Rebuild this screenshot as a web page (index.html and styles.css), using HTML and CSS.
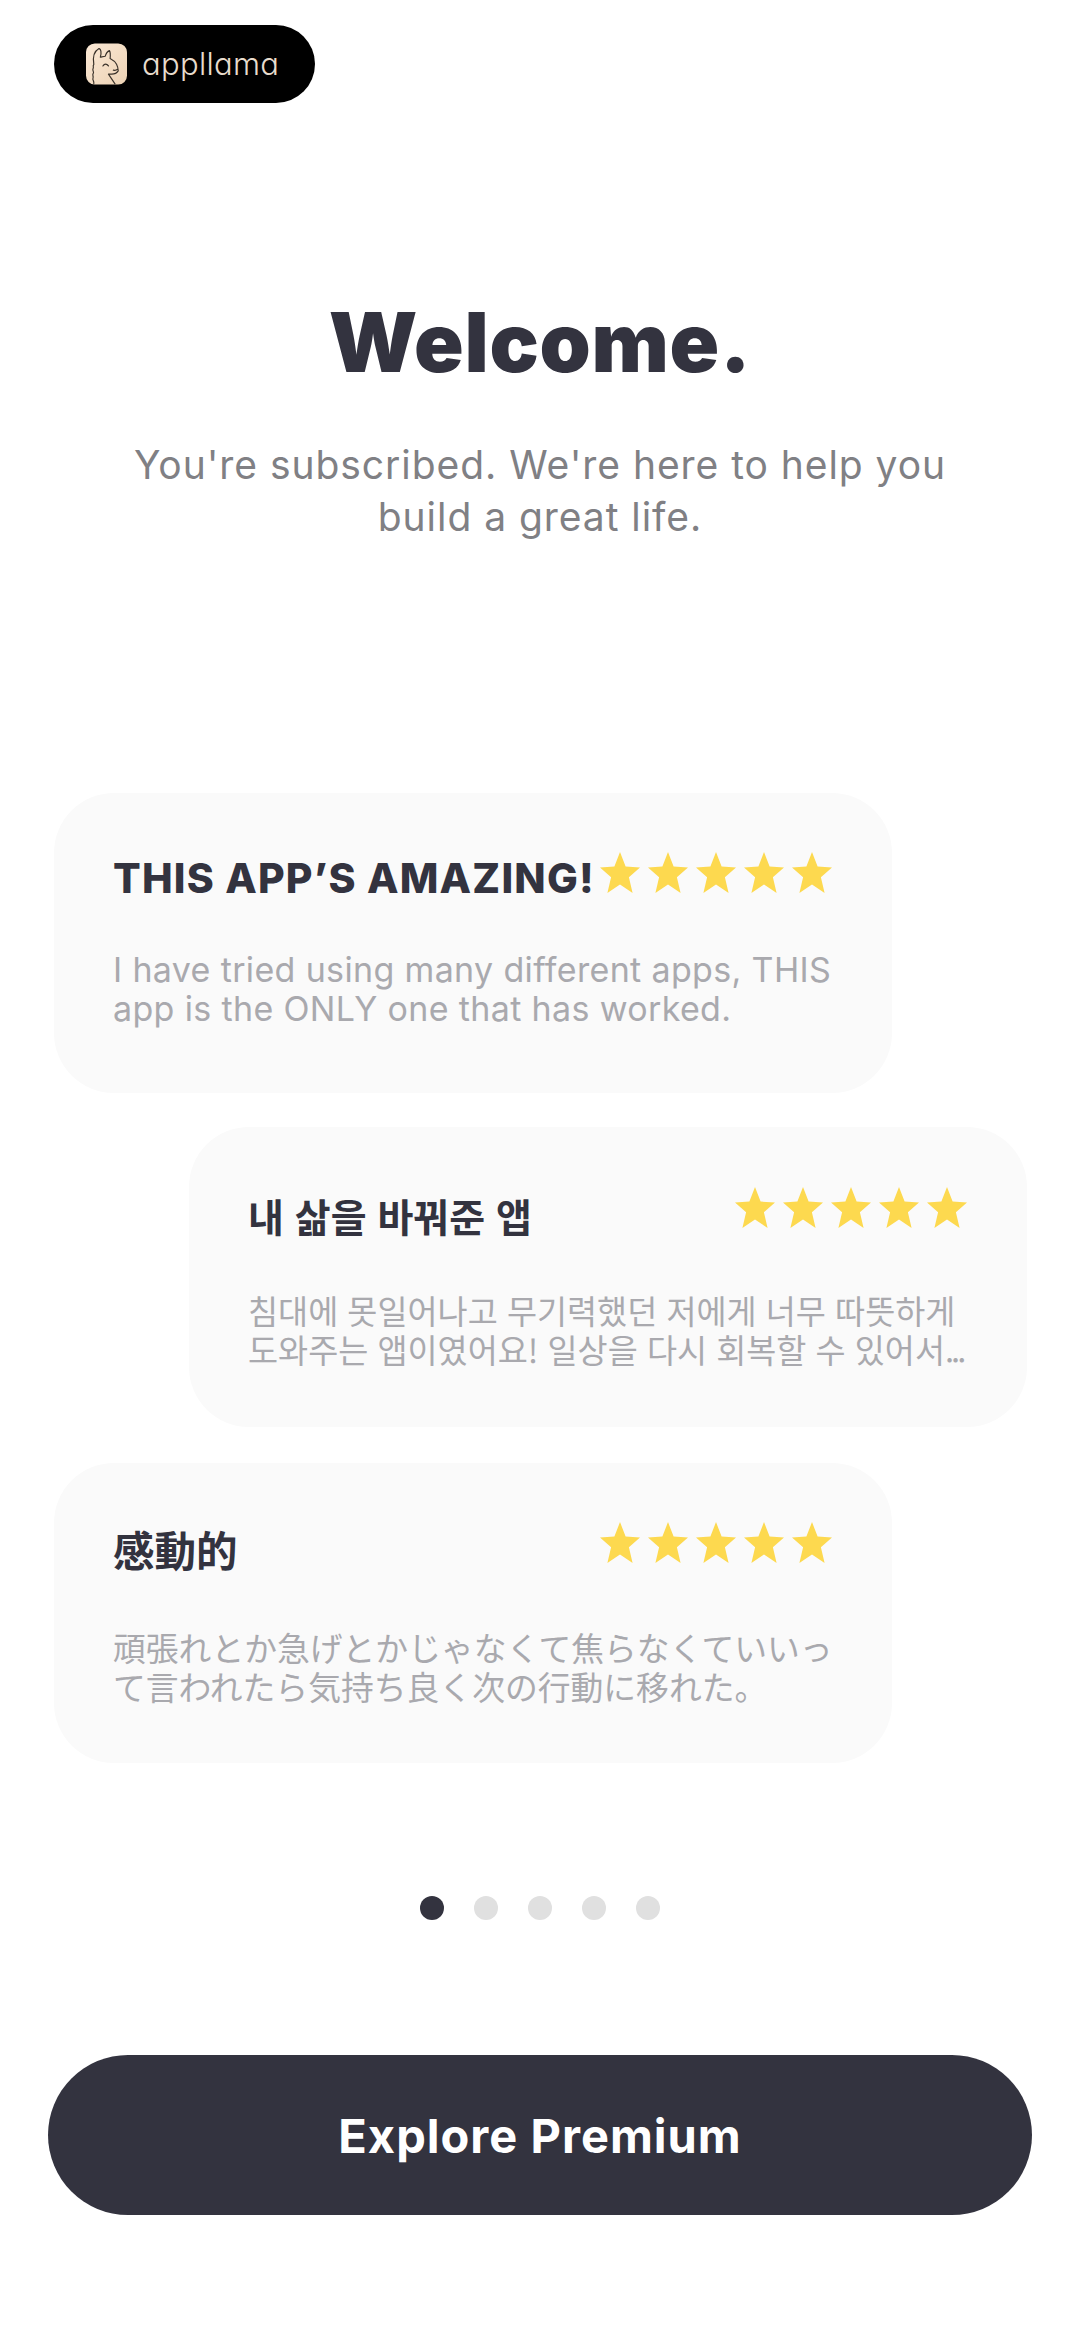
FILE: index.html
```html
<!DOCTYPE html>
<html lang="en">
<head>
<meta charset="utf-8">
<title>Welcome</title>
<link rel="stylesheet" href="styles.css">
</head>
<body>
<svg class="defs" width="0" height="0" aria-hidden="true">
  <symbol id="star" viewBox="0 0 40 42"><path d="M20 0l5.6 14.6 14.4.9-11.100 9.700 3.700 15.800L20 32.500 7.400 41l3.700-15.800L0 15.500l14.400-.9z"/></symbol>
</svg>
<main class="page">
  <div class="brand">
    <svg class="brand-icon" viewBox="0 0 42 42">
      <defs><linearGradient id="tile" x1="0" y1="0" x2="1" y2="1"><stop offset="0" stop-color="#fbe9d6"/><stop offset="1" stop-color="#ecd2b4"/></linearGradient></defs>
      <rect width="42" height="42" rx="9" fill="url(#tile)"/>
      <path class="llama" d="M8 21.300C7 15 8 8 13 5.300c2.500-.5 3 5 1.700 8.700 1.500-.3 3.500-.5 5-1 .8-2.500 2.500-5 4.300-5.700 1 1.500 1 5 .7 8 3 1.500 5.300 3.500 6.600 6 1 2 1.700 4 1.700 6.700-1.500 2.500-4 3.300-6.700 3.300h-3.300l6.700 10M8 21.300c-1.500 2 .3 3-.8 4.500-1 2 1.300 3 .3 4.500-1.500 2 .5 3.500-.3 5-1 2 1.300 3 .8 5.700M17.300 23c1.500-2.500 4-2.500 5.700 0M28 27.300c1.500.3 3.300 0 4.300-1"/>
    </svg>
    <span class="brand-name">appllama</span>
  </div>

  <section class="hero">
    <h1>Welcome.</h1>
    <p>You're subscribed. We're here to help you<br>build a great life.</p>
  </section>

  <section class="reviews">
    <article class="card card-en">
      <header class="card-head">
        <h2>THIS APP’S AMAZING!</h2>
        <div class="stars"><svg><use href="#star"/></svg><svg><use href="#star"/></svg><svg><use href="#star"/></svg><svg><use href="#star"/></svg><svg><use href="#star"/></svg></div>
      </header>
      <p>I have tried using many different apps, THIS<br>app is the ONLY one that has worked.</p>
    </article>
    <article class="card card-ko" lang="ko">
      <header class="card-head">
        <h2>내 삶을 바꿔준 앱</h2>
        <div class="stars"><svg><use href="#star"/></svg><svg><use href="#star"/></svg><svg><use href="#star"/></svg><svg><use href="#star"/></svg><svg><use href="#star"/></svg></div>
      </header>
      <p>침대에 못일어나고 무기력했던 저에게 너무 따뜻하게<br>도와주는 앱이였어요! 일상을 다시 회복할 수 있어서<span class="tail">...</span></p>
    </article>
    <article class="card card-ja" lang="ja">
      <header class="card-head">
        <h2>感動的</h2>
        <div class="stars"><svg><use href="#star"/></svg><svg><use href="#star"/></svg><svg><use href="#star"/></svg><svg><use href="#star"/></svg><svg><use href="#star"/></svg></div>
      </header>
      <p>頑張れとか急げとかじゃなくて焦らなくていいっ<br>て言われたら気持ち良く次の行動に移れた。</p>
    </article>
  </section>

  <div class="dots"><span class="dot active"></span><span class="dot"></span><span class="dot"></span><span class="dot"></span><span class="dot"></span></div>

  <button class="cta">Explore Premium</button>
</main>
</body>
</html>
```
FILE: styles.css
```css
* { box-sizing: border-box; }
html, body { margin: 0; background: #fff; }
body { font-family: Inter, "Noto Sans", sans-serif; color: #33333f; }
.defs { position: absolute; }
.page { width: 1080px; height: 2336px; padding-top: 25px; display: flex; flex-direction: column; }

.brand { margin-left: 54px; width: 261px; height: 78px; border-radius: 39px; background: #000; display: flex; align-items: center; padding-left: 32px; gap: 15px; }
.brand-icon { width: 41px; height: 42px; flex: none; }
.llama { fill: none; stroke: #3a322a; stroke-width: 1.200; stroke-linejoin: round; stroke-linecap: round; }
.brand-name { font-family: Inter, sans-serif; font-feature-settings: "cv11" 1; font-weight: 300; font-size: 31px; line-height: 40px; letter-spacing: 0.300px; color: #e8dccd; }

.hero { margin-top: 192px; text-align: center; height: 498px; }
.hero h1 { margin: 0; font-size: 82px; line-height: 96px; font-weight: 900; letter-spacing: 0.700px; color: #33333f; }
.hero p { margin: 48px 0 0; font-size: 39px; line-height: 52px; font-weight: 400; color: #808084; letter-spacing: 0.950px; }

.reviews { display: flex; flex-direction: column; gap: 34px; }
.card { width: 838px; height: 300px; margin-left: 54px; padding: 60px 60px 0 59px; background: #fafafa; border-radius: 60px; }
.card-head { display: flex; justify-content: space-between; align-items: flex-start; height: 90px; }
.card h2 { margin: 0; font-size: 40px; line-height: 50px; font-weight: 700; color: #33333f; white-space: nowrap; }
.card p { margin: 0; font-size: 33px; line-height: 39px; color: #a9a9ae; white-space: nowrap; }

.card-en h2 { font-family: Inter, sans-serif; font-size: 41px; font-weight: 800; letter-spacing: 1.200px; }
.card-en p { font-family: Inter, sans-serif; font-size: 34px; letter-spacing: 0.350px; margin-top: 7px; }

.card-ko { margin-left: 189px; }
.card-ko h2 { font-family: "Noto Sans CJK KR", sans-serif; font-size: 39px; padding-top: 3px; }
.card-ko p { font-family: "Noto Sans CJK KR", sans-serif; font-size: 32.700px; margin-top: 13px; }
.card-ko .stars { margin-top: 0; }
.tail { letter-spacing: -3px; }

.card-ja { margin-top: 2px; }
.card-ja h2 { font-family: "Noto Sans CJK JP", sans-serif; font-size: 41.500px; padding-top: 1px; }
.card-ja p { font-family: "Noto Sans CJK JP", sans-serif; font-size: 32.800px; margin-top: 14px; }

.stars { display: flex; gap: 8px; flex: none; margin-top: -1px; }
.stars svg { width: 40px; height: 42px; fill: #fdd94f; display: block; }

.dots { margin-top: 133px; display: flex; justify-content: center; gap: 30px; }
.dot { width: 24px; height: 24px; border-radius: 50%; background: #e0e0e0; }
.dot.active { background: #33333f; }

.cta { margin: 135px 48px 0; height: 160px; width: 984px; border: 0; border-radius: 80px; background: #33333f; color: #fff; font-family: Inter, sans-serif; font-size: 47px; letter-spacing: 1px; font-weight: 700; }
```
